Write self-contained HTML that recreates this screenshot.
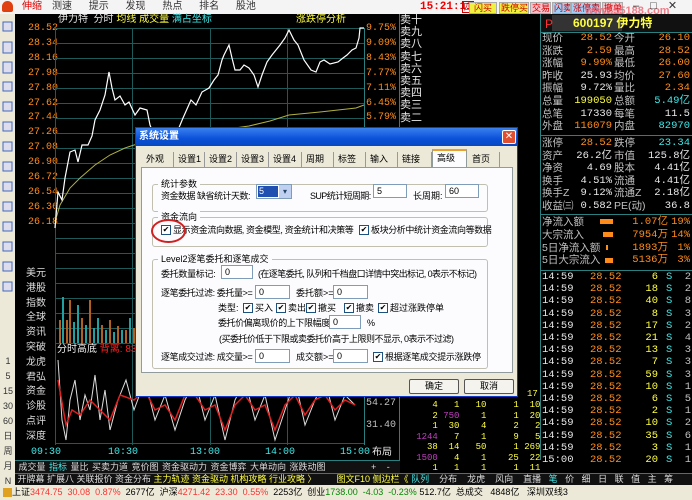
<!DOCTYPE html>
<html><head><meta charset="utf-8"><style>
*{margin:0;padding:0;box-sizing:border-box}
body{width:692px;height:500px;overflow:hidden;background:#000;position:relative;font-family:"Liberation Sans","Noto Sans CJK SC",sans-serif;font-size:11px;color:#ddd}
.a{position:absolute;white-space:nowrap;line-height:12px}
.m{font-family:"Liberation Mono","Noto Sans CJK SC",monospace}
.w{color:#e8e8e8}.o{color:#ff8c1a}.y{color:#ffff40}.c{color:#40e8e8}.g{color:#c0c0c0}.r{color:#ff3030}
.btn{position:absolute;top:2px;height:12px;font-size:9px;line-height:10px;padding:0 1px;border:1px solid #aaa;color:#c00;white-space:nowrap;overflow:hidden;text-align:center}
.dlg{position:absolute;left:135px;top:127px;width:383px;height:270px;background:#ece9d8;border:1px solid #0a3cc8;color:#000;font-size:9px}
.dlg .a{line-height:12px}
.inp{position:absolute;background:#fff;border:1px solid #7f9db9;height:14px;font-size:9px;padding-left:3px;line-height:12px;color:#000}
.cb{position:absolute;width:10px;height:10px;border:1px solid #1c5180;background:#fff;font-size:8px;line-height:8px;text-align:center;color:#000}
.grp{position:absolute;border:1px solid #c0bfb0;border-radius:3px}
.tab{position:absolute;top:24px;height:15px;font-size:9px;line-height:14px;border-right:1px solid #999;padding-left:4px}
.bt{position:absolute;top:251px;height:15px;width:50px;border:1px solid #555;background:#f4f3ee;text-align:center;line-height:13px;font-size:9px;border-radius:2px}
.rp{position:absolute;left:542px;width:150px;height:12.6px;font-size:10.5px;line-height:12px}
.rp span{position:absolute;top:0}
.l1{left:0}.v1{right:80px;text-align:right;font-family:"Liberation Mono",monospace}.l2{left:72px}.v2{right:2px;text-align:right;font-family:"Liberation Mono",monospace}
.tk{position:absolute;left:542px;width:150px;height:12px;font-size:10.5px;line-height:12px;font-family:"Liberation Mono",monospace}
.tk span{position:absolute;top:0}
</style></head><body>
<div class="a" style="left:0;top:0;width:692px;height:14px;background:#f4f4f4"></div>
<div class="a" style="left:2px;top:1px;width:11px;height:11px;background:#e04010;border-radius:50% 50% 2px 2px"></div>
<div class="a" style="left:22px;top:1px;font-size:10px;color:#d00">伸缩</div>
<div class="a" style="left:52px;top:1px;font-size:10px;color:#333;word-spacing:14px">测速 提示 发现 热点 排名 股池</div>
<div class="a m" style="left:420px;top:1px;font-size:11px;color:#e00;font-weight:bold">15:21:11</div>
<div class="a" style="left:462px;top:1px;width:12px;height:12px;border:1px solid #c00;color:#c00;font-size:9px;text-align:center;line-height:10px">四</div>
<div class="btn" style="left:469px;width:28px;background:#f0f040">闪买</div>
<div class="btn" style="left:499px;width:30px;background:#f0f040">跌停买</div>
<div class="btn" style="left:530px;width:21px;background:#f8c0c8">交易</div>
<div class="btn" style="left:552px;width:19px;background:#a0d0f8">闪卖</div>
<div class="btn" style="left:571px;width:30px;background:#a0d0f8">涨停卖</div>
<div class="btn" style="left:602px;width:21px;background:#f8c0c8">撤单</div>
<div class="a" style="left:585px;top:5px;font-size:11px;color:#f06070;font-weight:bold;opacity:.8">www.55188.com</div>
<div class="a" style="left:633px;top:0;color:#333;font-size:11px;word-spacing:8px">– □ ✕</div>
<div class="a" style="left:0;top:14px;width:15px;height:472px;background:#ece9d8"></div>
<svg class="a" style="left:0;top:14px" width="15" height="300">
<g fill="#dde" stroke="#4466bb">
<rect x="3" y="8" width="9" height="9"/><rect x="3" y="28" width="9" height="11"/><rect x="3" y="48" width="9" height="11"/><rect x="3" y="68" width="9" height="9"/><rect x="3" y="88" width="9" height="9"/><rect x="3" y="108" width="9" height="9"/><rect x="3" y="128" width="9" height="9"/><rect x="3" y="148" width="9" height="9"/><rect x="3" y="168" width="9" height="9"/><rect x="3" y="188" width="9" height="9"/><rect x="3" y="208" width="9" height="9"/><rect x="3" y="228" width="9" height="9"/><rect x="3" y="248" width="9" height="9"/><rect x="3" y="268" width="9" height="9"/></g></svg>
<div class="a g" style="left:2px;top:354px;color:#333;font-size:9px;line-height:15px;text-align:center;width:12px">1<br>5<br>15<br>30<br>60<br>日<br>周<br>月<br>N</div>
<div class="a" style="left:26px;top:267px;color:#ddd;font-size:10px;line-height:14.8px">美元<br>港股<br>指数<br>全球<br>资讯<br>突破<br>龙虎<br>君弘<br>资金<br>诊股<br>点评<br>深度</div>
<div class="a m o" style="left:28px;top:22px;font-size:10px;line-height:14.9px">28.52<br>28.34<br>28.16<br>27.98<br>27.80<br>27.62<br>27.44<br>27.26<br>27.08<br>26.90<br>26.72<br>26.54<br>26.36<br>26.18</div>
<div class="a m o" style="left:366px;top:22px;font-size:10px;line-height:14.9px">9.75%<br>9.09%<br>8.43%<br>7.77%<br>7.11%<br>6.45%<br>5.79%</div>
<div class="a" style="left:58px;top:14px;font-size:10px"><span class="w">伊力特</span>&nbsp;&nbsp;<span class="w">分时</span> <span class="y">均线</span> <span class="y">成交量</span> <span class="c">满占坐标</span></div>
<div class="a y" style="left:296px;top:14px;font-size:10px">涨跌停分析</div>
<svg class="a" style="left:0;top:0" width="400" height="460">
<g stroke="#1e5a5a" stroke-width="1">
<line x1="55.5" y1="28" x2="55.5" y2="445"/>
<line x1="132.5" y1="28" x2="132.5" y2="445"/><line x1="210.5" y1="28" x2="210.5" y2="445"/><line x1="287.5" y1="28" x2="287.5" y2="445"/>
<line x1="55" y1="28.5" x2="364" y2="28.5"/><line x1="55" y1="43.5" x2="364" y2="43.5"/><line x1="55" y1="58.5" x2="364" y2="58.5"/><line x1="55" y1="73.5" x2="364" y2="73.5"/><line x1="55" y1="88.5" x2="364" y2="88.5"/><line x1="55" y1="103.5" x2="364" y2="103.5"/><line x1="55" y1="118.5" x2="364" y2="118.5"/><line x1="55" y1="133.5" x2="364" y2="133.5"/><line x1="55" y1="148.5" x2="364" y2="148.5"/><line x1="55" y1="163.5" x2="364" y2="163.5"/><line x1="55" y1="178.5" x2="364" y2="178.5"/><line x1="55" y1="193.5" x2="364" y2="193.5"/><line x1="55" y1="208.5" x2="364" y2="208.5"/><line x1="55" y1="223.5" x2="364" y2="223.5"/><line x1="55" y1="238.5" x2="364" y2="238.5"/><line x1="55" y1="253.5" x2="364" y2="253.5"/><line x1="55" y1="268.5" x2="364" y2="268.5"/><line x1="55" y1="283.5" x2="364" y2="283.5"/><line x1="55" y1="298.5" x2="364" y2="298.5"/><line x1="55" y1="313.5" x2="364" y2="313.5"/><line x1="55" y1="328.5" x2="364" y2="328.5"/><line x1="55" y1="343.5" x2="364" y2="343.5"/>
<line x1="364.5" y1="28" x2="364.5" y2="445" stroke="#2a8080"/>
</g>
<polyline fill="none" stroke="#b0b040" stroke-width="1" points="55,222 60,205 70,188 80,178 95,165 110,155 125,148 134,145 160,138 190,133 220,130 249,126 270,121 289,115 320,112 356,108 364,105"/>
<polyline fill="none" stroke="#fff" stroke-width="1.2" points="55,228 58,192 62,200 65,178 70,152 75,150 78,162 82,145 88,145 92,136 95,120 100,110 105,95 109,72 112,88 115,100 120,96 125,105 129,102 135,115 140,108 147,110 150,125 155,138 160,132 165,140 170,128 178,130 183,118 191,100 196,105 202,92 209,88 214,80 218,75 222,60 224,55 229,45 232,58 235,70 240,70 244,65 249,68 254,75 258,87 262,75 267,62 272,55 280,45 285,38 289,30 294,40 298,45 304,60 311,70 316,72 320,62 324,60 330,64 338,62 343,58 347,55 352,50 356,48 359,38 360,28 364,28"/>
<g stroke-width="2">
<line x1="60" y1="343" x2="60" y2="320" stroke="#b06020"/><line x1="63" y1="343" x2="63" y2="297" stroke="#20a0a0"/><line x1="67" y1="343" x2="67" y2="320" stroke="#b06020"/><line x1="70" y1="343" x2="70" y2="300" stroke="#b06020"/><line x1="74" y1="343" x2="74" y2="322" stroke="#20a0a0"/><line x1="78" y1="343" x2="78" y2="305" stroke="#20a0a0"/><line x1="82" y1="343" x2="82" y2="318" stroke="#b06020"/><line x1="86" y1="343" x2="86" y2="325" stroke="#20a0a0"/><line x1="90" y1="343" x2="90" y2="300" stroke="#b06020"/><line x1="94" y1="343" x2="94" y2="328" stroke="#20a0a0"/><line x1="98" y1="343" x2="98" y2="318" stroke="#20a0a0"/><line x1="102" y1="343" x2="102" y2="325" stroke="#b06020"/><line x1="106" y1="343" x2="106" y2="330" stroke="#20a0a0"/><line x1="110" y1="343" x2="110" y2="320" stroke="#b06020"/><line x1="114" y1="343" x2="114" y2="332" stroke="#20a0a0"/><line x1="118" y1="343" x2="118" y2="326" stroke="#b06020"/><line x1="122" y1="343" x2="122" y2="330" stroke="#20a0a0"/><line x1="126" y1="343" x2="126" y2="330" stroke="#b06020"/><line x1="130" y1="343" x2="130" y2="318" stroke="#20a0a0"/><line x1="134" y1="343" x2="134" y2="328" stroke="#b06020"/></g>
<text x="57" y="352" font-size="10" fill="#eee" font-family="Liberation Sans,Noto Sans CJK SC,sans-serif">分时高底 <tspan fill="#ff2020">背离: 83</tspan></text>
<line x1="55" y1="443.5" x2="364" y2="443.5" stroke="#3030ff"/>
<polyline fill="none" stroke="#ddd" points="58,360 62,420 66,440 70,400 75,380 80,420 85,395 90,410 95,375 100,420 105,390 110,430 118,400 126,380 134,410 145,380 155,420 165,395 175,430 185,400 195,380 205,420 215,395 225,440 235,400 245,380 255,420 265,395 275,440 285,410 295,380 305,425 315,400 325,380 335,420 345,395 355,405"/>
<polyline fill="none" stroke="#e02020" stroke-width="1.5" points="58,380 66,425 72,410 80,415 90,400 100,410 110,420 120,395 134,400 145,390 155,410 165,405 175,420 185,395 195,395 205,410 215,405 225,430 235,405 245,395 255,410 265,405 275,430 285,405 295,395 305,415 315,400 325,395 335,410 345,400 355,405"/>
</svg>
<div class="a m g" style="left:366px;top:398px;font-size:10px">54.27</div>
<div class="a m g" style="left:366px;top:420px;font-size:10px">31.40</div>
<div class="a m c" style="left:31px;top:447px;font-size:10px">09:30</div>
<div class="a m c" style="left:108px;top:447px;font-size:10px">10:30</div>
<div class="a m c" style="left:190px;top:447px;font-size:10px">13:00</div>
<div class="a m c" style="left:265px;top:447px;font-size:10px">14:00</div>
<div class="a m c" style="left:340px;top:447px;font-size:10px">15:00</div>
<div class="a w" style="left:372px;top:447px;font-size:10px">布局</div>
<div class="a" style="left:399px;top:14px;width:1px;height:446px;background:#2a8080"></div>
<div class="a w" style="left:400px;top:14px;font-size:11px;line-height:12.2px">卖十<br>卖九<br>卖八<br>卖七<br>卖六<br>卖五<br>卖四<br>卖三<br>卖二</div>
<div class="a m" style="left:400px;top:400px;font-size:9px;line-height:10.5px;white-space:pre"><span class="y">      4   1   10     1  10</span>
<span class="y">      2 </span><span style="color:#c040c0">750</span><span class="y">    1     1  20</span>
<span class="y">      1  30    4     2   2</span>
<span style="color:#c040c0">   1244</span><span class="y">   7    1     9   5</span>
<span class="y">     38  14   50     1 269</span>
<span style="color:#c040c0">   1500</span><span class="y">   4    1    25  22</span>
<span class="y">      1   1    1     1  11</span></div>
<div class="a m y" style="left:527px;top:388px;font-size:9px">17</div>
<div class="a" style="left:540px;top:14px;width:1px;height:446px;background:#2a8080"></div>
<div class="a" style="left:541px;top:14px;width:151px;height:18px;background:#111"></div>
<div class="a" style="left:552px;top:15px;width:70px;height:16px;background:#333"></div>
<div class="a r" style="left:545px;top:18px;font-size:12px">P</div>
<div class="a y" style="left:573px;top:17px;font-size:12px;font-weight:bold">600197 伊力特</div>
<div class="a" style="left:541px;top:32px;width:151px;height:1px;background:#2a8080"></div>
<div class="rp" style="top:32px"><span class="l1 g">现价</span><span class="v1 o">28.52</span><span class="l2 g">今开</span><span class="v2 o">26.10</span></div>
<div class="rp" style="top:44.6px"><span class="l1 g">涨跌</span><span class="v1 o">2.59</span><span class="l2 g">最高</span><span class="v2 o">28.52</span></div>
<div class="rp" style="top:57.2px"><span class="l1 g">涨幅</span><span class="v1 o">9.99%</span><span class="l2 g">最低</span><span class="v2 o">26.00</span></div>
<div class="rp" style="top:69.8px"><span class="l1 g">昨收</span><span class="v1 w">25.93</span><span class="l2 g">均价</span><span class="v2 o">27.60</span></div>
<div class="rp" style="top:82.4px"><span class="l1 g">振幅</span><span class="v1 w">9.72%</span><span class="l2 g">量比</span><span class="v2 o">2.34</span></div>
<div class="rp" style="top:95px"><span class="l1 g">总量</span><span class="v1 y">199050</span><span class="l2 g">总额</span><span class="v2 c">5.49亿</span></div>
<div class="rp" style="top:107.6px"><span class="l1 g">总笔</span><span class="v1 w">17330</span><span class="l2 g">每笔</span><span class="v2 w">11.5</span></div>
<div class="rp" style="top:120.2px"><span class="l1 g">外盘</span><span class="v1 o">116079</span><span class="l2 g">内盘</span><span class="v2 c">82970</span></div>
<div class="a" style="left:541px;top:135px;width:151px;height:1px;background:#2a8080"></div>
<div class="rp" style="top:137px"><span class="l1 g">涨停</span><span class="v1 o">28.52</span><span class="l2 g">跌停</span><span class="v2 c">23.34</span></div>
<div class="rp" style="top:149.6px"><span class="l1 g">资产</span><span class="v1 w">26.2亿</span><span class="l2 g">市值</span><span class="v2 w">125.8亿</span></div>
<div class="rp" style="top:162.2px"><span class="l1 g">净资</span><span class="v1 w">4.69</span><span class="l2 g">股本</span><span class="v2 w">4.41亿</span></div>
<div class="rp" style="top:174.8px"><span class="l1 g">换手</span><span class="v1 w">4.51%</span><span class="l2 g">流通</span><span class="v2 w">4.41亿</span></div>
<div class="rp" style="top:187.4px"><span class="l1 g">换手Z</span><span class="v1 w">9.12%</span><span class="l2 g">流通Z</span><span class="v2 w">2.18亿</span></div>
<div class="rp" style="top:200px"><span class="l1 g">收益㈢</span><span class="v1 w">0.582</span><span class="l2 g">PE(动)</span><span class="v2 w">36.8</span></div>
<div class="a" style="left:541px;top:214px;width:151px;height:1px;background:#2a8080"></div>
<div class="rp" style="top:216px"><span class="l1 g">净流入额</span><span class="v1 o" style="right:24px">1.07亿</span><span class="v2 o">19%</span></div>
<div class="rp" style="top:228.8px"><span class="l1 g">大宗流入</span><span class="v1 o" style="right:24px">7954万</span><span class="v2 o">14%</span></div>
<div class="rp" style="top:241.6px"><span class="l1 g">5日净流入额</span><span class="v1 o" style="right:24px">1893万</span><span class="v2 o">1%</span></div>
<div class="rp" style="top:254.4px"><span class="l1 g">5日大宗流入</span><span class="v1 o" style="right:24px">5136万</span><span class="v2 o">3%</span></div>
<div class="a" style="left:600px;top:219px;width:13px;height:5px;background:#ff8c1a"></div>
<div class="a" style="left:603px;top:232px;width:10px;height:5px;background:#ff8c1a"></div>
<div class="a" style="left:606px;top:245px;width:2px;height:5px;background:#ff8c1a"></div>
<div class="a" style="left:605px;top:258px;width:8px;height:5px;background:#ff8c1a"></div>
<div class="a" style="left:541px;top:270px;width:151px;height:1px;background:#2a8080"></div>
<div class="tk" style="top:271px"><span class="w" style="left:0">14:59</span><span class="o" style="left:48px">28.52</span><span class="y" style="right:34px">6</span><span class="c" style="left:124px">S</span><span class="g" style="right:1px">2</span></div>
<div class="tk" style="top:283.2px"><span class="w" style="left:0">14:59</span><span class="o" style="left:48px">28.52</span><span class="y" style="right:34px">18</span><span class="c" style="left:124px">S</span><span class="g" style="right:1px">2</span></div>
<div class="tk" style="top:295.4px"><span class="w" style="left:0">14:59</span><span class="o" style="left:48px">28.52</span><span class="y" style="right:34px">40</span><span class="c" style="left:124px">S</span><span class="g" style="right:1px">8</span></div>
<div class="tk" style="top:307.6px"><span class="w" style="left:0">14:59</span><span class="o" style="left:48px">28.52</span><span class="y" style="right:34px">8</span><span class="c" style="left:124px">S</span><span class="g" style="right:1px">3</span></div>
<div class="tk" style="top:319.8px"><span class="w" style="left:0">14:59</span><span class="o" style="left:48px">28.52</span><span class="y" style="right:34px">17</span><span class="c" style="left:124px">S</span><span class="g" style="right:1px">2</span></div>
<div class="tk" style="top:332px"><span class="w" style="left:0">14:59</span><span class="o" style="left:48px">28.52</span><span class="y" style="right:34px">21</span><span class="c" style="left:124px">S</span><span class="g" style="right:1px">4</span></div>
<div class="tk" style="top:344.2px"><span class="w" style="left:0">14:59</span><span class="o" style="left:48px">28.52</span><span class="y" style="right:34px">13</span><span class="c" style="left:124px">S</span><span class="g" style="right:1px">3</span></div>
<div class="tk" style="top:356.4px"><span class="w" style="left:0">14:59</span><span class="o" style="left:48px">28.52</span><span class="y" style="right:34px">7</span><span class="c" style="left:124px">S</span><span class="g" style="right:1px">3</span></div>
<div class="tk" style="top:368.6px"><span class="w" style="left:0">14:59</span><span class="o" style="left:48px">28.52</span><span class="y" style="right:34px">59</span><span class="c" style="left:124px">S</span><span class="g" style="right:1px">3</span></div>
<div class="tk" style="top:380.8px"><span class="w" style="left:0">14:59</span><span class="o" style="left:48px">28.52</span><span class="y" style="right:34px">10</span><span class="c" style="left:124px">S</span><span class="g" style="right:1px">1</span></div>
<div class="tk" style="top:393px"><span class="w" style="left:0">14:59</span><span class="o" style="left:48px">28.52</span><span class="y" style="right:34px">6</span><span class="c" style="left:124px">S</span><span class="g" style="right:1px">5</span></div>
<div class="tk" style="top:405.2px"><span class="w" style="left:0">14:59</span><span class="o" style="left:48px">28.52</span><span class="y" style="right:34px">2</span><span class="c" style="left:124px">S</span><span class="g" style="right:1px">1</span></div>
<div class="tk" style="top:417.4px"><span class="w" style="left:0">14:59</span><span class="o" style="left:48px">28.52</span><span class="y" style="right:34px">10</span><span class="c" style="left:124px">S</span><span class="g" style="right:1px">2</span></div>
<div class="tk" style="top:429.6px"><span class="w" style="left:0">14:59</span><span class="o" style="left:48px">28.52</span><span class="y" style="right:34px">35</span><span class="c" style="left:124px">S</span><span class="g" style="right:1px">6</span></div>
<div class="tk" style="top:441.8px"><span class="w" style="left:0">14:59</span><span class="o" style="left:48px">28.52</span><span class="y" style="right:34px">3</span><span class="c" style="left:124px">S</span><span class="g" style="right:1px">1</span></div>
<div class="tk" style="top:454px"><span class="w" style="left:0">15:00</span><span class="o" style="left:48px">28.52</span><span class="y" style="right:34px">20</span><span class="c" style="left:124px">S</span><span class="g" style="right:1px">1</span></div>
<div class="a" style="left:15px;top:460px;width:385px;height:13px;background:#111;border-top:1px solid #2a8080;font-size:9px;line-height:12px;color:#ddd;word-spacing:1px">&nbsp;成交量 <span class="c">指标</span> 量比 买卖力道 竞价图 资金驱动力 资金博弈 大单动向 涨跌动图 &nbsp;&nbsp;&nbsp;&nbsp;&nbsp;&nbsp;&nbsp;&nbsp;&nbsp;&nbsp;&nbsp; + &nbsp;&nbsp;-</div>
<div class="a" style="left:15px;top:473px;width:677px;height:12px;background:#111;border-top:1px solid #2a8080;font-size:9px;line-height:11px;color:#ddd">&nbsp;开牌幕 扩展八 关联报价 资金分布 <span class="y">主力轨迹 资金驱动 机构攻略 行业攻略 〉</span> &nbsp;&nbsp;&nbsp;&nbsp;&nbsp;&nbsp;&nbsp;<span class="y">图文F10 侧边栏《</span> <span class="c">队列</span> &nbsp;&nbsp;&nbsp;分布 &nbsp;&nbsp;&nbsp;龙虎 &nbsp;&nbsp;&nbsp;风向 &nbsp;&nbsp;&nbsp;直播 &nbsp;&nbsp;<span class="c">笔</span> &nbsp;&nbsp;价 &nbsp;&nbsp;细 &nbsp;&nbsp;日 &nbsp;&nbsp;联 &nbsp;&nbsp;值 &nbsp;&nbsp;主 &nbsp;&nbsp;筹</div>
<div class="a" style="left:0;top:485px;width:692px;height:15px;background:#ece9d8;font-size:9px;line-height:14px;color:#000;padding-left:3px"><span style="display:inline-block;width:9px;height:9px;background:#e0a020;vertical-align:middle"></span>上证<span class="r">3474.75 &nbsp;30.08 &nbsp;0.87%</span> &nbsp;2677亿 &nbsp;沪深<span class="r">4271.42 &nbsp;23.30 &nbsp;0.55%</span> &nbsp;2253亿 &nbsp;创业<span style="color:#080">1738.00 &nbsp;-4.03 &nbsp;-0.23%</span> 512.7亿 &nbsp;总成交 &nbsp;&nbsp;4848亿 &nbsp;&nbsp;深圳双线3</div>
<div class="dlg">
<div class="a" style="left:0;top:0;width:381px;height:18px;background:linear-gradient(#3a80f0,#0a50d8 60%,#0848c0);color:#fff;font-size:10px;line-height:18px;padding-left:3px;font-weight:bold">系统设置</div>
<div class="a" style="left:366px;top:2px;width:14px;height:14px;background:#e05030;border:1px solid #fff;border-radius:2px;color:#fff;font-size:10px;text-align:center;line-height:12px">✕</div>
<div class="tab" style="left:6px;width:32px">外观</div>
<div class="tab" style="left:38px;width:31px">设置1</div>
<div class="tab" style="left:69px;width:32px">设置2</div>
<div class="tab" style="left:101px;width:32px">设置3</div>
<div class="tab" style="left:133px;width:33px">设置4</div>
<div class="tab" style="left:166px;width:32px">周期</div>
<div class="tab" style="left:198px;width:32px">标签</div>
<div class="tab" style="left:230px;width:32px">输入</div>
<div class="tab" style="left:262px;width:34px">链接</div>
<div class="tab" style="left:296px;width:35px;top:21px;height:19px;background:#fcfcfe;border:1px solid #919b9c;border-bottom:none;border-top:2px solid #e8a030">高级</div>
<div class="tab" style="left:332px;width:32px">首页</div>
<div class="a" style="left:5px;top:39px;width:372px;height:206px;background:#fcfcfe;border:1px solid #919b9c"></div>
<div class="grp" style="left:16px;top:56px;width:336px;height:28px"></div>
<div class="a" style="left:22px;top:50px;background:#fcfcfe;padding:0 3px">统计参数</div>
<div class="a" style="left:25px;top:62px;letter-spacing:-0.5px">资金数据 缺省统计天数:</div>
<div class="a" style="left:120px;top:56px;width:36px;height:15px;border:1px solid #7f9db9;background:#fff"></div>
<div class="a" style="left:122px;top:58px;width:20px;height:11px;background:#2050b0;color:#fff;font-size:9px;line-height:11px;padding-left:1px">5</div>
<div class="a" style="left:143px;top:57px;width:12px;height:13px;background:#c0d0f0;color:#246;font-size:8px;text-align:center;line-height:13px">▾</div>
<div class="a" style="left:174px;top:62px;letter-spacing:-0.6px">SUP统计短周期:</div>
<div class="inp" style="left:237px;top:56px;width:34px">5</div>
<div class="a" style="left:277px;top:62px">长周期:</div>
<div class="inp" style="left:309px;top:56px;width:34px">60</div>
<div class="grp" style="left:16px;top:89px;width:336px;height:30px"></div>
<div class="a" style="left:22px;top:83px;background:#fcfcfe;padding:0 3px">资金流向</div>
<div class="cb" style="left:25px;top:97px">✔</div><div class="a" style="left:37px;top:96px;letter-spacing:-0.4px">显示资金流向数据, 资金模型, 资金统计和决策等</div>
<div class="cb" style="left:223px;top:97px">✔</div><div class="a" style="left:235px;top:96px;letter-spacing:-0.4px">板块分析中统计资金流向等数据</div>
<div class="a" style="left:15px;top:91px;width:35px;height:24px;border:2px solid #d02020;border-radius:50%"></div>
<div class="grp" style="left:16px;top:131px;width:336px;height:110px"></div>
<div class="a" style="left:22px;top:125px;background:#fcfcfe;padding:0 3px">Level2逐笔委托和逐笔成交</div>
<div class="a" style="left:25px;top:140px;letter-spacing:-0.3px">委托数量标记:</div>
<div class="inp" style="left:85px;top:137px;width:32px">0</div>
<div class="a" style="left:122px;top:140px;letter-spacing:-0.6px">(在逐笔委托, 队列和千档盘口详情中突出标记, 0表示不标记)</div>
<div class="a" style="left:25px;top:159px;letter-spacing:-0.4px">逐笔委托过滤: 委托量&gt;=</div>
<div class="inp" style="left:119px;top:157px;width:35px">0</div>
<div class="a" style="left:160px;top:159px">委托额&gt;=</div>
<div class="inp" style="left:197px;top:157px;width:35px">0</div>
<div class="a" style="left:82px;top:174px">类型:</div>
<div class="cb" style="left:107px;top:175px">✔</div><div class="a" style="left:119px;top:174px">买入</div>
<div class="cb" style="left:140px;top:175px">✔</div><div class="a" style="left:152px;top:174px">卖出</div>
<div class="cb" style="left:170px;top:175px">✔</div><div class="a" style="left:182px;top:174px">撤买</div>
<div class="cb" style="left:208px;top:175px">✔</div><div class="a" style="left:220px;top:174px">撤卖</div>
<div class="cb" style="left:242px;top:175px">✔</div><div class="a" style="left:254px;top:174px">超过涨跌停单</div>
<div class="a" style="left:82px;top:189px;letter-spacing:-0.4px">委托价偏离现价的上下限幅度</div>
<div class="inp" style="left:193px;top:187px;width:32px">0</div>
<div class="a" style="left:231px;top:189px">%</div>
<div class="a" style="left:83px;top:205px;letter-spacing:-0.5px">(买委托价低于下限或卖委托价高于上限则不显示, 0表示不过滤)</div>
<div class="a" style="left:25px;top:223px;letter-spacing:-0.4px">逐笔成交过滤: 成交量&gt;=</div>
<div class="inp" style="left:119px;top:221px;width:35px">0</div>
<div class="a" style="left:160px;top:223px">成交额&gt;=</div>
<div class="inp" style="left:197px;top:221px;width:35px">0</div>
<div class="cb" style="left:237px;top:224px">✔</div><div class="a" style="left:249px;top:223px;letter-spacing:-0.3px">根据逐笔成交提示涨跌停</div>
<div class="bt" style="left:273px">确定</div>
<div class="bt" style="left:328px">取消</div>
</div>
</body></html>
